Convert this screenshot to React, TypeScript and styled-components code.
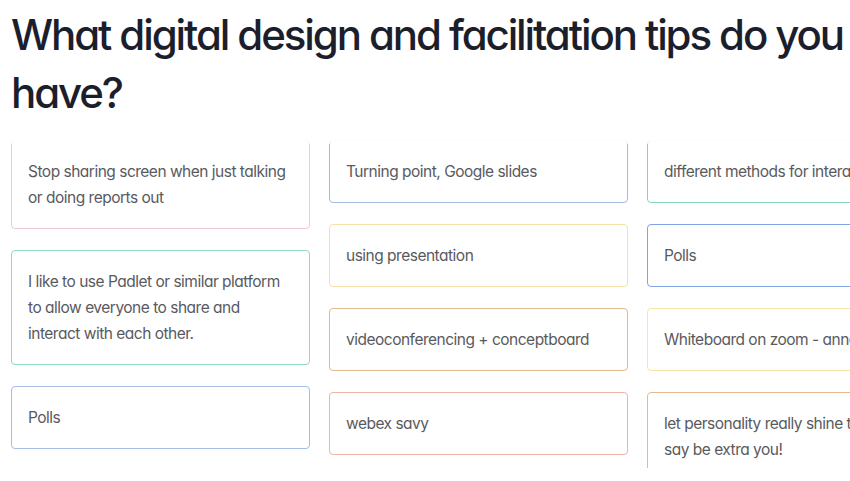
import React from 'react'
import styled, { createGlobalStyle } from 'styled-components'

interface Idea {
  text: string
  color: string
}

const columns: Idea[][] = [
  [
    { text: 'Stop sharing screen when just talking or doing reports out', color: '#efcad3' },
    { text: 'I like to use Padlet or similar platform to allow everyone to share and interact with each other.', color: '#8fd9bd' },
    { text: 'Polls', color: '#a4bee6' },
  ],
  [
    { text: 'Turning point, Google slides', color: '#a3bbe2' },
    { text: 'using presentation', color: '#f6e2a8' },
    { text: 'videoconferencing + conceptboard', color: '#e2b98e' },
    { text: 'webex savy', color: '#edb3a9' },
  ],
  [
    { text: 'different methods for interaction', color: '#86d6b6' },
    { text: 'Polls', color: '#80a5e0' },
    { text: 'Whiteboard on zoom - annotate', color: '#f7e5a8' },
    { text: 'let personality really shine thru as we say be extra you!', color: '#e5ba8c' },
  ],
]

const GlobalStyle = createGlobalStyle`
  html, body {
    margin: 0;
    padding: 0;
    background: #ffffff;
    overflow: hidden;
  }
  body {
    font-family: Inter, "Noto Sans", sans-serif;
    font-feature-settings: 'cv11' 1;
  }
`

const App: React.FC = () => {
  return (
    <StyledPage>
      <GlobalStyle />
      <StyledTitle>What digital design and facilitation tips do you have?</StyledTitle>
      <StyledBoard>
        {columns.map((col, i) => (
          <StyledColumn key={i}>
            {col.map((idea, j) => (
              <StyledCard key={j} $color={idea.color}>
                {idea.text}
              </StyledCard>
            ))}
          </StyledColumn>
        ))}
      </StyledBoard>
    </StyledPage>
  )
}

const StyledPage = styled.main`
  width: 850px;
  height: 481px;
  overflow: hidden;
  display: flex;
  flex-direction: column;
`
const StyledTitle = styled.h1`
  margin: 6px 0 0 11px;
  width: 839px;
  font-size: 42px;
  line-height: 58px;
  font-weight: 500;
  letter-spacing: -2.1px;
  color: #1c1e2b;
`
const StyledBoard = styled.section`
  position: relative;
  margin-top: 18px;
  padding-left: 11px;
  height: 328px;
  overflow: hidden;
  display: grid;
  grid-template-columns: repeat(3, 299px);
  column-gap: 19px;
  align-items: start;
  &::before {
    content: '';
    position: absolute;
    left: 0;
    right: 0;
    top: 0;
    height: 4px;
    background: linear-gradient(#ffffff, rgba(255, 255, 255, 0.6));
    z-index: 1;
  }
`
const StyledColumn = styled.div`
  display: flex;
  flex-direction: column;
  gap: 21px;
`
const StyledCard = styled.div<{ $color: string }>`
  box-sizing: border-box;
  padding: 17.5px 18px 17.5px 16px;
  border: 1.5px solid ${(p) => p.$color};
  border-radius: 4px;
  background: #ffffff;
  font-size: 15.5px;
  line-height: 26px;
  letter-spacing: -0.5px;
  color: #595a5e;
`

export default App
